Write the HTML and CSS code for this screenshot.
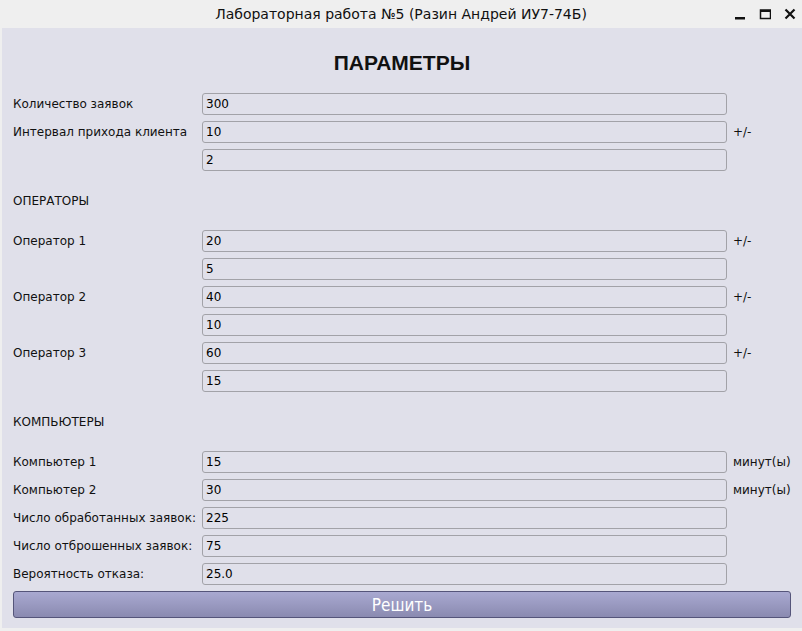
FILE: index.html
```html
<!DOCTYPE html>
<html lang="ru">
<head>
<meta charset="utf-8">
<title>Лабораторная работа №5</title>
<link rel="stylesheet" href="styles.css">
</head>
<body>
<div class="window">
  <div class="titlebar">
    <span class="title">Лабораторная работа №5 (Разин Андрей ИУ7-74Б)</span>
    <div class="controls">
      <svg class="ctl" width="12" height="12" viewBox="0 0 12 12"><rect x="1" y="9" width="10" height="2.5" fill="#111"/></svg>
      <svg class="ctl" width="12" height="12" viewBox="0 0 12 12"><rect x="1.5" y="2" width="10" height="8.5" fill="none" stroke="#111" stroke-width="1.5"/><rect x="1.5" y="2" width="10" height="2" fill="#111"/></svg>
      <svg class="ctl" width="12" height="12" viewBox="0 0 12 12"><path d="M1.5 1.5 L10.5 10.5 M10.5 1.5 L1.5 10.5" stroke="#111" stroke-width="2.2"/></svg>
    </div>
  </div>
  <div class="panel">
    <h1 class="heading">ПАРАМЕТРЫ</h1>
    <div class="form">
      <label class="lbl">Количество заявок</label><input class="field" value="300"><span></span>
      <label class="lbl">Интервал прихода клиента</label><input class="field" value="10"><span class="suffix">+/-</span>
      <span></span><input class="field" value="2"><span></span>
    </div>
    <div class="section">ОПЕРАТОРЫ</div>
    <div class="form">
      <label class="lbl">Оператор 1</label><input class="field" value="20"><span class="suffix">+/-</span>
      <span></span><input class="field" value="5"><span></span>
      <label class="lbl">Оператор 2</label><input class="field" value="40"><span class="suffix">+/-</span>
      <span></span><input class="field" value="10"><span></span>
      <label class="lbl">Оператор 3</label><input class="field" value="60"><span class="suffix">+/-</span>
      <span></span><input class="field" value="15"><span></span>
    </div>
    <div class="section">КОМПЬЮТЕРЫ</div>
    <div class="form">
      <label class="lbl">Компьютер 1</label><input class="field" value="15"><span class="suffix">минут(ы)</span>
      <label class="lbl">Компьютер 2</label><input class="field" value="30"><span class="suffix">минут(ы)</span>
      <label class="lbl">Число обработанных заявок:</label><input class="field" value="225"><span></span>
      <label class="lbl">Число отброшенных заявок:</label><input class="field" value="75"><span></span>
      <label class="lbl">Вероятность отказа:</label><input class="field" value="25.0"><span></span>
    </div>
    <button class="solve">Решить</button>
  </div>
</div>
</body>
</html>
```
FILE: styles.css
```css
* { box-sizing: border-box; }
html, body { margin: 0; padding: 0; }
body {
  width: 802px;
  height: 631px;
  background: #efefef;
  font-family: "DejaVu Sans", sans-serif;
  font-size: 12px;
  color: #000;
  overflow: hidden;
}
.window { width: 802px; height: 631px; display: flex; flex-direction: column; }
.titlebar {
  height: 28px;
  position: relative;
  display: flex;
  align-items: center;
  justify-content: center;
  background: #efefef;
}
.title { font-size: 14px; color: #111; }
.controls {
  position: absolute;
  right: 6px;
  top: 8px;
  display: flex;
  gap: 13px;
}
.ctl { display: block; }
.panel {
  margin-left: 2px;
  width: 800px;
  height: 600px;
  background: #e0e0ea;
  padding: 23px 11px 0 11px;
  display: flex;
  flex-direction: column;
}
.heading {
  margin: 0 0 18px 0;
  height: 24px;
  line-height: 24px;
  text-align: center;
  font-family: "Liberation Sans", Arial, sans-serif;
  font-weight: bold;
  font-size: 21px;
  color: #111;
}
.form {
  display: grid;
  grid-template-columns: 189px 525px auto;
  row-gap: 6px;
  align-items: center;
}
.lbl { line-height: 22px; white-space: nowrap; color: #111; }
.field {
  height: 22px;
  width: 525px;
  margin: 0;
  border: 1px solid #a2a2a8;
  border-radius: 3px;
  background: #e0e0ea;
  padding: 0 3px;
  font-family: "DejaVu Sans", sans-serif;
  font-size: 12px;
  color: #000;
  outline: none;
}
.suffix { padding-left: 6px; line-height: 22px; color: #111; white-space: nowrap; }
.section { margin: 19px 0 18px 0; line-height: 22px; color: #111; }
.solve {
  margin-top: 6px;
  height: 27px;
  width: 778px;
  border: 1px solid #55557a;
  border-radius: 3px;
  background: linear-gradient(#a9a9d1, #8a8ab0);
  color: #ffffff;
  font-family: "DejaVu Sans Condensed", "DejaVu Sans", sans-serif;
  font-size: 17px;
  padding: 0;
}
```
